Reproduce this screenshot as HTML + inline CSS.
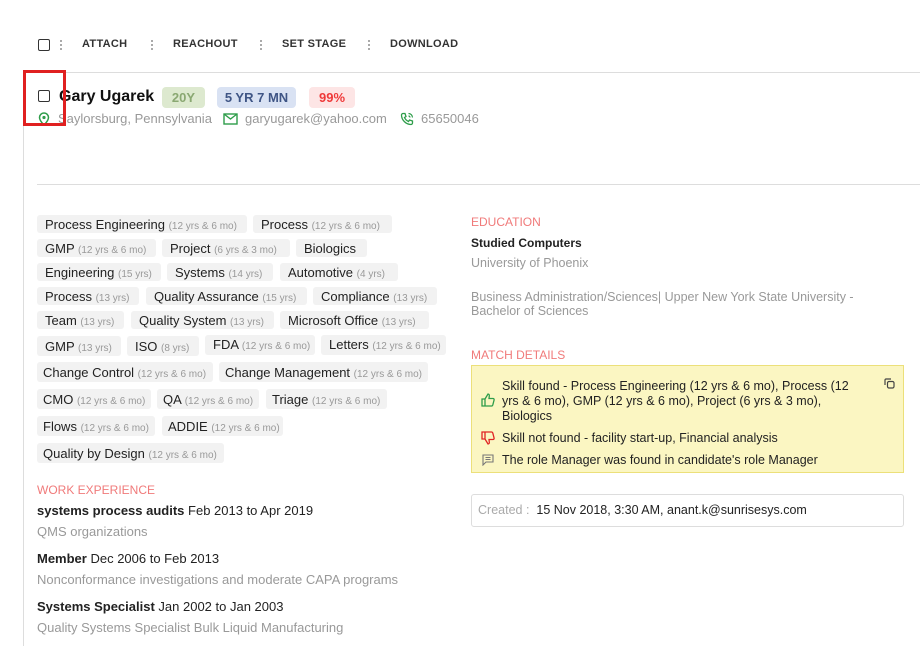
<!DOCTYPE html>
<html><head><style>
body{margin:0;width:920px;height:646px;background:#fff;font-family:"Liberation Sans",sans-serif;color:#222;position:relative;overflow:hidden}
.a{position:absolute}
.cb{position:absolute;width:10px;height:10px;border:1.5px solid #333;border-radius:2px}
.tb{font-size:11px;font-weight:bold;color:#333;letter-spacing:.3px}
.dots{position:absolute;width:2px;height:12px;background:repeating-linear-gradient(#aaa 0 2px,transparent 2px 4px)}
.chip{position:absolute;height:18px;background:#f2f2f2;border-radius:3px;font-size:13px;line-height:19px;padding-left:8px;box-sizing:border-box;white-space:nowrap;color:#222}
.chip i{font-style:normal;font-size:10px;color:#999}
.sec{font-size:12px;color:#f07a7a}
.g{color:#999;font-size:13px}
</style></head><body>
<div class="cb" style="left:38px;top:39px"></div>
<div class="dots" style="left:60px;top:40px"></div>
<div class="a tb" style="left:82px;top:38px">ATTACH</div>
<div class="dots" style="left:151px;top:40px"></div>
<div class="a tb" style="left:173px;top:38px">REACHOUT</div>
<div class="dots" style="left:260px;top:40px"></div>
<div class="a tb" style="left:282px;top:38px">SET STAGE</div>
<div class="dots" style="left:368px;top:40px"></div>
<div class="a tb" style="left:390px;top:38px">DOWNLOAD</div>
<div class="a" style="left:23px;top:72px;width:897px;height:1px;background:#ddd"></div>
<div class="a" style="left:23px;top:72px;width:1px;height:574px;background:#ddd"></div>
<div class="a" style="left:37px;top:184px;width:883px;height:1px;background:#ddd"></div>
<div class="cb" style="left:38px;top:90px"></div>
<div class="a" style="left:59px;top:88px;font-size:16px;font-weight:bold;color:#111">Gary Ugarek</div>
<div class="a" style="left:162px;top:87px;width:43px;height:21px;background:#dde9cf;border-radius:4px;color:#8aa872;font-size:13px;font-weight:bold;text-align:center;line-height:21px">20Y</div>
<div class="a" style="left:217px;top:87px;width:79px;height:21px;background:#d9e2f3;border-radius:4px;color:#3f5585;font-size:13px;font-weight:bold;text-align:center;line-height:21px">5 YR 7 MN</div>
<div class="a" style="left:309px;top:87px;width:46px;height:21px;background:#fde5e5;border-radius:4px;color:#ef3a3a;font-size:13px;font-weight:bold;text-align:center;line-height:21px">99%</div>
<svg class="a" style="left:38px;top:112px" width="12" height="14" viewBox="0 0 12 14"><path d="M6 13C2 9 1.5 7 1.5 5.5a4.5 4.5 0 0 1 9 0C10.5 7 10 9 6 13z" fill="none" stroke="#2e9d4a" stroke-width="1.5"/><circle cx="6" cy="5.5" r="1.6" fill="#2e9d4a"/></svg>
<div class="a g" style="left:58px;top:111px">Saylorsburg, Pennsylvania</div>
<svg class="a" style="left:223px;top:113px" width="15" height="12"><rect x="1" y="1" width="13" height="10" fill="none" stroke="#2e9d4a" stroke-width="1.4"/><path d="M1 1l6.5 5L14 1" fill="none" stroke="#2e9d4a" stroke-width="1.4"/></svg>
<div class="a g" style="left:245px;top:111px">garyugarek@yahoo.com</div>
<svg class="a" style="left:400px;top:112px" width="14" height="14" viewBox="0 0 14 14"><path d="M3 1.5l2 0 1 3-1.5 1c.8 1.8 2.2 3.2 4 4l1-1.5 3 1v2c0 .8-.7 1.5-1.5 1.5C6 12.5 1.5 8 1.5 3 1.5 2.2 2.2 1.5 3 1.5z" fill="none" stroke="#2e9d4a" stroke-width="1.3"/><path d="M8.5 1.5a4 4 0 0 1 4 4M8.5 4a1.6 1.6 0 0 1 1.5 1.5" fill="none" stroke="#2e9d4a" stroke-width="1.2"/></svg>
<div class="a g" style="left:421px;top:111px">65650046</div>

<div class="chip" style="left:37px;top:215px;width:210px">Process Engineering <i>(12 yrs &amp; 6 mo)</i></div>
<div class="chip" style="left:253px;top:215px;width:139px">Process <i>(12 yrs &amp; 6 mo)</i></div>
<div class="chip" style="left:37px;top:239px;width:119px">GMP <i>(12 yrs &amp; 6 mo)</i></div>
<div class="chip" style="left:162px;top:239px;width:128px">Project <i>(6 yrs &amp; 3 mo)</i></div>
<div class="chip" style="left:296px;top:239px;width:71px">Biologics</div>
<div class="chip" style="left:37px;top:263px;width:124px">Engineering <i>(15 yrs)</i></div>
<div class="chip" style="left:167px;top:263px;width:106px">Systems <i>(14 yrs)</i></div>
<div class="chip" style="left:280px;top:263px;width:118px">Automotive <i>(4 yrs)</i></div>
<div class="chip" style="left:37px;top:287px;width:102px">Process <i>(13 yrs)</i></div>
<div class="chip" style="left:146px;top:287px;width:161px">Quality Assurance <i>(15 yrs)</i></div>
<div class="chip" style="left:313px;top:287px;width:124px">Compliance <i>(13 yrs)</i></div>
<div class="chip" style="left:37px;top:311px;width:87px">Team <i>(13 yrs)</i></div>
<div class="chip" style="left:131px;top:311px;width:143px">Quality System <i>(13 yrs)</i></div>
<div class="chip" style="left:280px;top:311px;width:149px">Microsoft Office <i>(13 yrs)</i></div>
<div class="chip" style="left:37px;top:336px;width:84px;height:20px;line-height:21px">GMP <i>(13 yrs)</i></div>
<div class="chip" style="left:127px;top:336px;width:72px;height:20px;line-height:21px">ISO <i>(8 yrs)</i></div>
<div class="chip" style="left:205px;top:335px;width:110px;height:20px">FDA <i>(12 yrs &amp; 6 mo)</i></div>
<div class="chip" style="left:321px;top:335px;width:125px;height:20px">Letters <i>(12 yrs &amp; 6 mo)</i></div>
<div class="chip" style="left:37px;top:362px;width:176px;height:20px;line-height:21px;padding-left:6px">Change Control <i>(12 yrs &amp; 6 mo)</i></div>
<div class="chip" style="left:219px;top:362px;width:209px;height:20px;line-height:21px;padding-left:6px">Change Management <i>(12 yrs &amp; 6 mo)</i></div>
<div class="chip" style="left:37px;top:389px;width:114px;height:20px;line-height:21px;padding-left:6px">CMO <i>(12 yrs &amp; 6 mo)</i></div>
<div class="chip" style="left:157px;top:389px;width:102px;height:20px;line-height:21px;padding-left:6px">QA <i>(12 yrs &amp; 6 mo)</i></div>
<div class="chip" style="left:266px;top:389px;width:121px;height:20px;line-height:21px;padding-left:6px">Triage <i>(12 yrs &amp; 6 mo)</i></div>
<div class="chip" style="left:37px;top:416px;width:118px;height:20px;line-height:21px;padding-left:6px">Flows <i>(12 yrs &amp; 6 mo)</i></div>
<div class="chip" style="left:162px;top:416px;width:121px;height:20px;line-height:21px;padding-left:6px">ADDIE <i>(12 yrs &amp; 6 mo)</i></div>
<div class="chip" style="left:37px;top:443px;width:187px;height:20px;line-height:21px;padding-left:6px">Quality by Design <i>(12 yrs &amp; 6 mo)</i></div>

<div class="a sec" style="left:37px;top:483px">WORK EXPERIENCE</div>
<div class="a" style="left:37px;top:503px;font-size:13px"><b>systems process audits</b> Feb 2013 to Apr 2019</div>
<div class="a g" style="left:37px;top:524px">QMS organizations</div>
<div class="a" style="left:37px;top:551px;font-size:13px"><b>Member</b> Dec 2006 to Feb 2013</div>
<div class="a g" style="left:37px;top:572px">Nonconformance investigations and moderate CAPA programs</div>
<div class="a" style="left:37px;top:599px;font-size:13px"><b>Systems Specialist</b> Jan 2002 to Jan 2003</div>
<div class="a g" style="left:37px;top:620px">Quality Systems Specialist Bulk Liquid Manufacturing</div>

<div class="a sec" style="left:471px;top:215px">EDUCATION</div>
<div class="a" style="left:471px;top:236px;font-size:12px;font-weight:bold">Studied Computers</div>
<div class="a g" style="left:471px;top:256px;font-size:12.5px">University of Phoenix</div>
<div class="a g" style="left:471px;top:290px;font-size:12.5px;width:420px;line-height:14px">Business Administration/Sciences| Upper New York State University - Bachelor of Sciences</div>
<div class="a sec" style="left:471px;top:348px">MATCH DETAILS</div>
<div class="a" style="left:471px;top:365px;width:433px;height:108px;background:#fbf6c2;border:1px solid #ece07a;box-sizing:border-box"></div>
<svg class="a" style="left:481px;top:393px" width="14" height="14" viewBox="0 0 14 14"><path d="M1 6h3v7H1zM4 6l3-5c1 0 1.5.8 1.3 2L8 5.5h4c.8 0 1.3.7 1.1 1.4l-1.3 5c-.2.6-.7 1.1-1.3 1.1H4" fill="none" stroke="#2e9d4a" stroke-width="1.3"/></svg>
<div class="a" style="left:502px;top:379px;width:362px;font-size:12.5px;line-height:15px">Skill found - Process Engineering (12 yrs &amp; 6 mo), Process (12 yrs &amp; 6 mo), GMP (12 yrs &amp; 6 mo), Project (6 yrs &amp; 3 mo), Biologics</div>
<svg class="a" style="left:884px;top:378px" width="11" height="11"><rect x="3.5" y="3.5" width="6.5" height="6.5" rx="1.5" fill="none" stroke="#444" stroke-width="1.2"/><path d="M1 7V2a1 1 0 0 1 1-1h5" fill="none" stroke="#444" stroke-width="1.2"/></svg>
<svg class="a" style="left:481px;top:431px" width="14" height="14" viewBox="0 0 14 14"><path d="M1 1h3v7H1zM4 8l3 5c1 0 1.5-.8 1.3-2L8 8.5h4c.8 0 1.3-.7 1.1-1.4l-1.3-5C11.6 1.5 11.1 1 10.5 1H4" fill="none" stroke="#e02424" stroke-width="1.3"/></svg>
<div class="a" style="left:502px;top:431px;font-size:12.5px">Skill not found - facility start-up, Financial analysis</div>
<svg class="a" style="left:482px;top:454px" width="12" height="12"><path d="M1 1h10v7H4L1 11z" fill="none" stroke="#777" stroke-width="1.1"/><path d="M3.5 3.5h5M3.5 5.5h5" stroke="#777"/></svg>
<div class="a" style="left:502px;top:453px;font-size:12.5px">The role Manager was found in candidate's role Manager</div>
<div class="a" style="left:471px;top:494px;width:433px;height:33px;border:1px solid #ddd;border-radius:3px;box-sizing:border-box"></div>
<div class="a" style="left:478px;top:503px;font-size:12.5px"><span style="color:#aaa">Created :</span>&nbsp; 15 Nov 2018, 3:30 AM, anant.k@sunrisesys.com</div>

<div class="a" style="left:23px;top:70px;width:43px;height:56px;border:3px solid #e02020;box-sizing:border-box"></div>
</body></html>
